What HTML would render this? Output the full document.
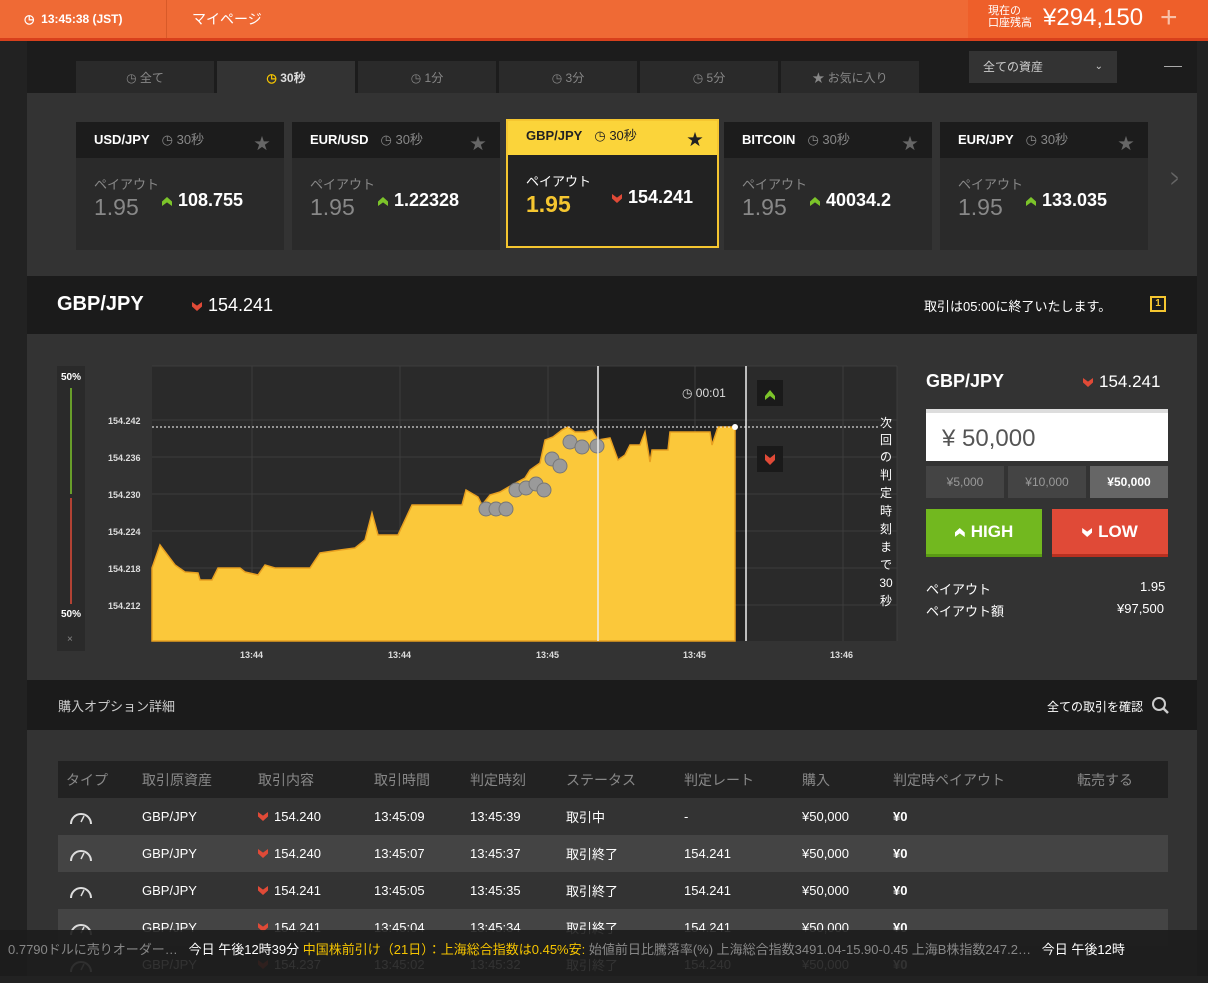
<!DOCTYPE html>
<html><head><meta charset="utf-8">
<style>
*{margin:0;padding:0;box-sizing:border-box}
body{width:1208px;height:976px;overflow:hidden;background:#222;font-family:"Liberation Sans","Noto Sans CJK JP",sans-serif;color:#fff;position:relative}
.abs{position:absolute}
.top{left:0;top:0;width:1208px;background:#ef6a35;border-bottom:3px solid #d8401c;height:41px}
.tabs{left:27px;top:41px;width:1170px;height:52px;background:#1c1c1c}
.tab{position:absolute;top:20px;height:32px;width:138px;background:#2a2a2a;color:#888;font-size:12px;text-align:center;line-height:34px}
.panel{left:27px;top:93px;width:1170px;height:183px;background:#333}
.card{position:absolute;top:29px;width:208px;height:128px;background:#2a2a2a}
.card .h{height:36px;background:#1c1c1c;padding-left:18px;line-height:36px;font-size:13px;font-weight:bold}
.card .h span{font-weight:normal;color:#888;margin-left:12px}
.card .star{position:absolute;right:14px;top:8px;color:#666;font-size:16px}
.card .p{position:absolute;left:18px;top:52px;font-size:13px;color:#888}
.card .v{position:absolute;left:18px;top:72px;font-size:23px;color:#888}
.card .r{position:absolute;left:86px;top:68px;font-size:18px;font-weight:bold}
.up{display:inline-block;width:10px;height:9px;background:#7cc42a;clip-path:polygon(50% 0,100% 50%,100% 100%,50% 60%,0 100%,0 50%);margin-right:6px}
.dn{display:inline-block;width:10px;height:9px;background:#e04a37;clip-path:polygon(0 0,50% 40%,100% 0,100% 50%,50% 100%,0 50%);margin-right:6px}
.bar{left:27px;width:1170px;background:#1b1b1b}
.sec{left:27px;width:1170px;background:#333}
table{border-collapse:collapse;font-size:13px}
td{height:37px;padding:0}
.th td{color:#888;font-size:14px;background:#222}
.g{display:block;margin-left:2px}
</style></head><body>
<div class="abs top">
 <div class="abs" style="left:0;top:0;width:167px;height:38px;border-right:1px solid #d85a28;font-size:12px;font-weight:bold;line-height:38px;padding-left:24px">&#9719;&nbsp; 13:45:38 (JST)</div>
 <div class="abs" style="left:192px;top:0;line-height:38px;font-size:14px">マイページ</div>
 <div class="abs" style="left:968px;top:0;width:240px;height:38px;background:#ee5f2a">
  <div class="abs" style="left:20px;top:5px;font-size:11px;line-height:12px">現在の<br>口座残高</div>
  <div class="abs" style="left:75px;top:4px;font-size:24px">¥294,150</div>
  <div class="abs" style="left:192px;top:0;font-size:30px;font-weight:200;line-height:36px;color:#f8c0a8">+</div>
 </div>
</div>
<div class="abs tabs">
 <div class="tab" style="left:49px">◷ 全て</div>
 <div class="tab" style="left:190px;background:#333;color:#ddd;font-weight:bold"><span style="color:#f5c400">◷</span> 30秒</div>
 <div class="tab" style="left:331px">◷ 1分</div>
 <div class="tab" style="left:472px">◷ 3分</div>
 <div class="tab" style="left:613px">◷ 5分</div>
 <div class="tab" style="left:754px">★ お気に入り</div>
 <div class="abs" style="left:942px;top:10px;width:148px;height:32px;background:#333;color:#ccc;font-size:12px;line-height:32px;padding-left:14px">全ての資産<span style="position:absolute;right:14px;font-size:10px">&#8964;</span></div>
 <div class="abs" style="left:1137px;top:25px;width:18px;height:1px;background:#aaa"></div>
</div>
<div class="abs panel">
 <div class="card" style="left:49px"><div class="h">USD/JPY<span>◷ 30秒</span></div><div class="star">★</div><div class="p">ペイアウト</div><div class="v">1.95</div><div class="r"><i class="up"></i>108.755</div></div>
 <div class="card" style="left:265px"><div class="h">EUR/USD<span>◷ 30秒</span></div><div class="star">★</div><div class="p">ペイアウト</div><div class="v">1.95</div><div class="r"><i class="up"></i>1.22328</div></div>
 <div class="card" style="left:479px;width:213px;height:129px;border:2px solid #f5c630;top:26px;background:#222"><div class="h" style="background:#fbd43a;color:#222;height:34px;line-height:30px;padding-left:18px">GBP/JPY<span style="color:#222">◷ 30秒</span></div><div class="star" style="color:#222;top:5px">★</div><div class="p" style="color:#fff;top:50px">ペイアウト</div><div class="v" style="color:#f5c630;top:70px;font-weight:bold">1.95</div><div class="r" style="left:104px;top:66px"><i class="dn"></i>154.241</div></div>
 <div class="card" style="left:697px"><div class="h">BITCOIN<span>◷ 30秒</span></div><div class="star">★</div><div class="p">ペイアウト</div><div class="v">1.95</div><div class="r"><i class="up"></i>40034.2</div></div>
 <div class="card" style="left:913px"><div class="h">EUR/JPY<span>◷ 30秒</span></div><div class="star">★</div><div class="p">ペイアウト</div><div class="v">1.95</div><div class="r"><i class="up"></i>133.035</div></div>
 <div class="abs" style="left:1140px;top:70px;color:#666;font-size:26px;transform:scaleX(.5)">&gt;</div>
</div>
<div class="abs bar" style="top:276px;height:58px">
 <div class="abs" style="left:30px;top:17px;font-size:20px;font-weight:bold">GBP/JPY</div>
 <div class="abs" style="left:165px;top:19px;font-size:18px"><i class="dn"></i>154.241</div>
 <div class="abs" style="left:897px;top:20px;font-size:13px">取引は05:00に終了いたします。</div>
 <div class="abs" style="left:1123px;top:20px;width:16px;height:16px;border:2px solid #f5c630;color:#f5c630;font-size:10px;text-align:center;line-height:12px;font-weight:bold">1</div>
</div>
<div class="abs sec" style="top:334px;height:346px"></div>
<svg class="abs" style="left:0;top:334px" width="1208" height="346">
 <rect x="57" y="32" width="28" height="285" fill="#2a2a2a"/>
 <text x="61" y="46" font-size="10" font-weight="bold" fill="#fff">50%</text>
 <text x="61" y="283" font-size="10" font-weight="bold" fill="#fff">50%</text>
 <line x1="71" y1="54" x2="71" y2="160" stroke="#7cc42a" stroke-width="1.5"/>
 <line x1="71" y1="164" x2="71" y2="270" stroke="#e04a37" stroke-width="1.5"/>
 <text x="67" y="308" font-size="10" fill="#888">×</text>
 <rect x="152" y="32" width="745" height="275" fill="#2a2a2a"/>
 <rect x="598" y="32" width="148" height="275" fill="#222"/>
 <g stroke="#3c3c3c" stroke-width="1">
  <line x1="252" y1="32" x2="252" y2="307"/><line x1="400" y1="32" x2="400" y2="307"/><line x1="548" y1="32" x2="548" y2="307"/><line x1="695" y1="32" x2="695" y2="307"/><line x1="843" y1="32" x2="843" y2="307"/>
  <line x1="152" y1="86" x2="897" y2="86"/><line x1="152" y1="123" x2="897" y2="123"/><line x1="152" y1="160" x2="897" y2="160"/><line x1="152" y1="197" x2="897" y2="197"/><line x1="152" y1="234" x2="897" y2="234"/><line x1="152" y1="271" x2="897" y2="271"/>
  <line x1="897" y1="32" x2="897" y2="307"/><line x1="152" y1="32" x2="897" y2="32"/>
 </g>
 <g font-size="9" fill="#ddd" font-weight="bold">
  <text x="108" y="90">154.242</text><text x="108" y="127">154.236</text><text x="108" y="164">154.230</text><text x="108" y="201">154.224</text><text x="108" y="238">154.218</text><text x="108" y="275">154.212</text>
  <text x="240" y="324">13:44</text><text x="388" y="324">13:44</text><text x="536" y="324">13:45</text><text x="683" y="324">13:45</text><text x="830" y="324">13:46</text>
 </g>
 <path fill="#fbc83a" stroke="#e8a020" stroke-width="1.5" d="M152 234 L160 211 L175 231 L185 238 L198 239 L200 246 L212 246 L218 234 L240 234 L245 238 L258 241 L265 231 L275 234 L310 234 L320 219 L340 216 L355 214 L365 206 L372 179 L378 201 L398 201 L412 171 L462 171 L466 156 L478 163 L482 171 L490 161 L500 158 L512 151 L525 144 L530 136 L540 129 L545 106 L553 103 L562 96 L568 93 L575 98 L585 98 L592 96 L598 106 L610 104 L618 126 L625 121 L630 111 L640 111 L645 98 L650 128 L652 116 L668 116 L670 98 L710 98 L712 111 L718 93 L735 93 L735 307 L152 307 Z"/>
 <g fill="#9a9a9a" stroke="#777">
  <circle cx="486" cy="175" r="7"/><circle cx="496" cy="175" r="7"/><circle cx="506" cy="175" r="7"/>
  <circle cx="516" cy="156" r="7"/><circle cx="526" cy="154" r="7"/><circle cx="536" cy="150" r="7"/><circle cx="544" cy="156" r="7"/>
  <circle cx="552" cy="125" r="7"/><circle cx="560" cy="132" r="7"/>
  <circle cx="570" cy="108" r="7"/><circle cx="582" cy="113" r="7"/><circle cx="597" cy="112" r="7"/>
 </g>
 <line x1="598" y1="32" x2="598" y2="307" stroke="#eee" stroke-width="1.5"/>
 <line x1="746" y1="32" x2="746" y2="307" stroke="#eee" stroke-width="1.5"/>
 <line x1="152" y1="93" x2="878" y2="93" stroke="#fff" stroke-width="1" stroke-dasharray="2,2"/>
 <circle cx="735" cy="93" r="3" fill="#fff"/>
 <text x="682" y="63" font-size="12" fill="#ddd">◷ 00:01</text>
 <rect x="757" y="46" width="26" height="26" fill="#1a1a1a"/><path d="M765 62 L770 56 L775 62 L775 66 L770 62 L765 66Z" fill="#7cc42a"/>
 <rect x="757" y="112" width="26" height="26" fill="#1a1a1a"/><path d="M765 120 L770 124 L775 120 L775 126 L770 131 L765 126Z" fill="#e04a37"/>
 <g font-size="12" fill="#fff" text-anchor="middle">
  <text x="886" y="93">次</text><text x="886" y="110">回</text><text x="886" y="127">の</text><text x="886" y="145">判</text><text x="886" y="163">定</text><text x="886" y="181">時</text><text x="886" y="199">刻</text><text x="886" y="217">ま</text><text x="886" y="235">で</text><text x="886" y="253">30</text><text x="886" y="271">秒</text>
 </g>
</svg>
<div class="abs" style="left:926px;top:371px;font-size:18px;font-weight:bold">GBP/JPY</div>
<div class="abs" style="left:1083px;top:372px;font-size:17px"><i class="dn"></i>154.241</div>
<div class="abs" style="left:926px;top:409px;width:242px;height:52px;background:#fff;border-top:4px solid #ddd;color:#555;font-size:24px;padding:12px 0 0 16px">¥ 50,000</div>
<div class="abs" style="left:926px;top:466px;width:78px;height:32px;background:#444;color:#999;font-size:12px;text-align:center;line-height:32px">¥5,000</div>
<div class="abs" style="left:1008px;top:466px;width:78px;height:32px;background:#444;color:#999;font-size:12px;text-align:center;line-height:32px">¥10,000</div>
<div class="abs" style="left:1090px;top:466px;width:78px;height:32px;background:#666;color:#fff;font-size:12px;font-weight:bold;text-align:center;line-height:32px">¥50,000</div>
<div class="abs" style="left:926px;top:509px;width:116px;height:48px;background:#72b81f;border-bottom:3px solid #5a9a14;font-size:17px;font-weight:bold;text-align:center;line-height:46px"><i class="up" style="background:#fff"></i>HIGH</div>
<div class="abs" style="left:1052px;top:509px;width:116px;height:48px;background:#e04a37;border-bottom:3px solid #b83020;font-size:17px;font-weight:bold;text-align:center;line-height:46px"><i class="dn" style="background:#fff"></i>LOW</div>
<div class="abs" style="left:926px;top:579px;font-size:13px">ペイアウト</div><div class="abs" style="left:1140px;top:579px;font-size:13px">1.95</div>
<div class="abs" style="left:926px;top:601px;font-size:13px">ペイアウト額</div><div class="abs" style="left:1117px;top:601px;font-size:13px">¥97,500</div>
<div class="abs bar" style="top:680px;height:50px">
 <div class="abs" style="left:31px;top:16px;font-size:13px;color:#ccc">購入オプション詳細</div>
 <div class="abs" style="left:1020px;top:18px;font-size:12px">全ての取引を確認</div>
 <svg class="abs" style="left:1124px;top:16px" width="20" height="20"><circle cx="8" cy="8" r="6" stroke="#ccc" stroke-width="2" fill="none"/><line x1="12" y1="12" x2="17" y2="17" stroke="#ccc" stroke-width="2.5"/></svg>
</div>
<div class="abs sec" style="top:730px;height:246px"></div>
<table class="abs" style="left:58px;top:761px;width:1110px">
<colgroup><col style="width:84px"><col style="width:116px"><col style="width:116px"><col style="width:96px"><col style="width:96px"><col style="width:118px"><col style="width:118px"><col style="width:91px"><col style="width:184px"><col></colgroup>
<tr class="th"><td style="padding-left:8px">タイプ</td><td>取引原資産</td><td>取引内容</td><td>取引時間</td><td>判定時刻</td><td>ステータス</td><td>判定レート</td><td>購入</td><td>判定時ペイアウト</td><td>転売する</td></tr>
<tr><td style="padding-left:8px"><svg class="g" width="26" height="18"><path d="M3 16 A10 10 0 1 1 23 16" stroke="#ddd" stroke-width="2" fill="none"/><line x1="13" y1="14" x2="16" y2="8" stroke="#ddd" stroke-width="1.5"/></svg></td><td>GBP/JPY</td><td><i class="dn"></i>154.240</td><td>13:45:09</td><td>13:45:39</td><td>取引中</td><td>-</td><td>¥50,000</td><td><b>¥0</b></td><td></td></tr>
<tr style="background:#444"><td style="padding-left:8px"><svg class="g" width="26" height="18"><path d="M3 16 A10 10 0 1 1 23 16" stroke="#ddd" stroke-width="2" fill="none"/><line x1="13" y1="14" x2="16" y2="8" stroke="#ddd" stroke-width="1.5"/></svg></td><td>GBP/JPY</td><td><i class="dn"></i>154.240</td><td>13:45:07</td><td>13:45:37</td><td>取引終了</td><td>154.241</td><td>¥50,000</td><td><b>¥0</b></td><td></td></tr>
<tr><td style="padding-left:8px"><svg class="g" width="26" height="18"><path d="M3 16 A10 10 0 1 1 23 16" stroke="#ddd" stroke-width="2" fill="none"/><line x1="13" y1="14" x2="16" y2="8" stroke="#ddd" stroke-width="1.5"/></svg></td><td>GBP/JPY</td><td><i class="dn"></i>154.241</td><td>13:45:05</td><td>13:45:35</td><td>取引終了</td><td>154.241</td><td>¥50,000</td><td><b>¥0</b></td><td></td></tr>
<tr style="background:#444"><td style="padding-left:8px"><svg class="g" width="26" height="18"><path d="M3 16 A10 10 0 1 1 23 16" stroke="#ddd" stroke-width="2" fill="none"/><line x1="13" y1="14" x2="16" y2="8" stroke="#ddd" stroke-width="1.5"/></svg></td><td>GBP/JPY</td><td><i class="dn"></i>154.241</td><td>13:45:04</td><td>13:45:34</td><td>取引終了</td><td>154.241</td><td>¥50,000</td><td><b>¥0</b></td><td></td></tr>
<tr><td style="padding-left:8px"><svg class="g" width="26" height="18"><path d="M3 16 A10 10 0 1 1 23 16" stroke="#ddd" stroke-width="2" fill="none"/><line x1="13" y1="14" x2="16" y2="8" stroke="#ddd" stroke-width="1.5"/></svg></td><td>GBP/JPY</td><td><i class="dn"></i>154.237</td><td>13:45:02</td><td>13:45:32</td><td>取引終了</td><td>154.240</td><td>¥50,000</td><td><b>¥0</b></td><td></td></tr>
</table>
<div class="abs" style="left:0;top:930px;width:1208px;height:46px;background:rgba(28,28,28,0.9);font-size:13px;line-height:40px;white-space:nowrap;padding-left:8px;color:#888">0.7790ドルに売りオーダー…&nbsp;&nbsp; <span style="color:#fff">今日 午後12時39分</span> <span style="color:#f5c400">中国株前引け（21日）：上海総合指数は0.45%安:</span> 始値前日比騰落率(%) 上海総合指数3491.04-15.90-0.45 上海B株指数247.2…&nbsp;&nbsp; <span style="color:#fff">今日 午後12時</span></div>
</body></html>
